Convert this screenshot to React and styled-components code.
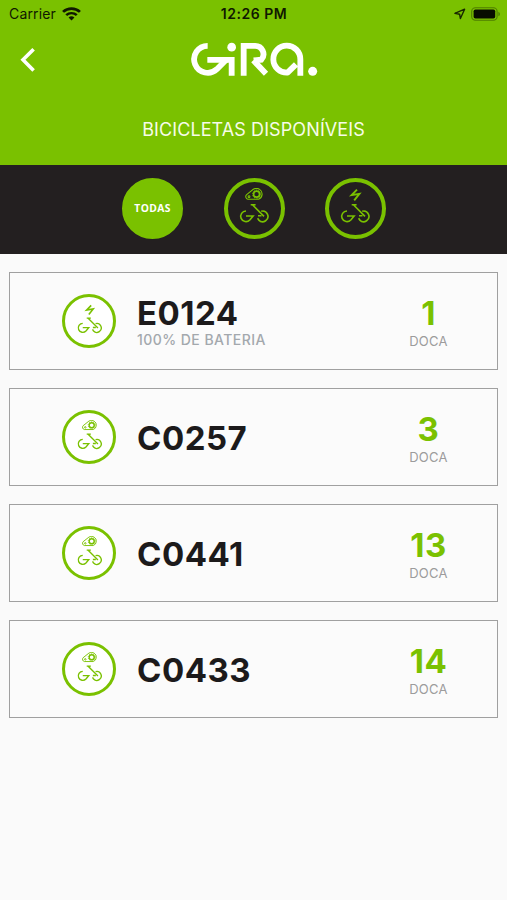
import React from "react";
import styled, { createGlobalStyle } from "styled-components";

const GREEN = "#7ac100";

const GlobalStyle = createGlobalStyle`
  * { box-sizing: border-box; }
  body { margin: 0; background: #fafafa; font-family: Inter, "Liberation Sans", sans-serif; }
`;

const Screen = styled.main`
  width: 507px;
  height: 900px;
  background: #fafafa;
  overflow: hidden;
`;

const Header = styled.header`
  height: 165px;
  background: ${GREEN};
  display: flex;
  flex-direction: column;
`;

const StatusBar = styled.div`
  height: 28px;
  padding: 0 6px 0 9px;
  display: grid;
  grid-template-columns: 1fr auto 1fr;
  align-items: center;
  color: #101800;
  font-size: 14px;
  line-height: 28px;
`;

const Carrier = styled.div`
  display: flex;
  align-items: center;
  gap: 6px;
  letter-spacing: 0.15px;
`;

const Clock = styled.div`
  font-weight: 600;
  font-size: 14px;
  letter-spacing: 0.5px;
  padding-right: 2px;
`;

const StatusIcons = styled.div`
  display: flex;
  align-items: center;
  justify-content: flex-end;
  gap: 5px;
`;

const NavBar = styled.div`
  height: 64px;
  padding: 0 20px;
  display: grid;
  grid-template-columns: 1fr auto 1fr;
  align-items: center;
`;

const BackButton = styled.button`
  width: 18px;
  height: 26px;
  padding: 0;
  border: 0;
  background: none;
  display: flex;
`;

const Title = styled.h1`
  margin: 25px 0 0;
  text-align: center;
  color: #f7fce8;
  font-size: 18px;
  line-height: 25px;
  font-weight: 400;
  letter-spacing: 0.1px;
`;

const FilterBar = styled.nav`
  height: 89px;
  background: #231f20;
  display: flex;
  align-items: center;
  justify-content: center;
  gap: 40.4px;
  padding: 0 0 3px 1px;
`;

const FilterButton = styled.button`
  width: 61px;
  height: 61px;
  padding: 0;
  border-radius: 50%;
  border: 4px solid ${GREEN};
  background: ${(p) => (p.$active ? GREEN : "transparent")};
  color: #fff;
  display: flex;
  align-items: center;
  justify-content: center;
  font: 700 10.3px "Open Sans", sans-serif;
  letter-spacing: 0.4px;
`;

const List = styled.ul`
  list-style: none;
  margin: 0;
  padding: 18px 9px;
  display: flex;
  flex-direction: column;
  gap: 18px;
`;

const Card = styled.li`
  height: 98px;
  border: 1px solid #a0a0a0;
  background: #fbfbfb;
  padding-left: 52px;
  display: flex;
  align-items: center;
`;

const BikeBadge = styled.div`
  width: 54px;
  height: 54px;
  border: 3px solid ${GREEN};
  border-radius: 50%;
  background: #fff;
  display: flex;
  align-items: center;
  justify-content: center;
`;

const BikeInfo = styled.div`
  flex: 1;
  margin-left: 21px;
  padding-top: 2px;
`;

const BikeCode = styled.div`
  color: #1c1a1b;
  font-size: 33px;
  font-weight: 700;
  line-height: 36px;
  letter-spacing: 0.5px;
`;

const Battery = styled.div`
  color: #a3a8ad;
  font-size: 14px;
  font-weight: 500;
  line-height: 18px;
  letter-spacing: 0.45px;
`;

const Dock = styled.div`
  width: 137px;
  padding-top: 6px;
  text-align: center;
`;

const DockNumber = styled.div`
  color: ${GREEN};
  font-size: 33px;
  font-weight: 700;
  line-height: 35px;
  letter-spacing: 0.5px;
`;

const DockLabel = styled.div`
  color: #9c9c9c;
  font-size: 13px;
  line-height: 21px;
  letter-spacing: 0.3px;
`;

function Wifi() {
  return (
    <svg width="19" height="14" viewBox="0 0 18 14" preserveAspectRatio="none" fill="none" stroke="#101800">
      <path d="M1 4.9a11.4 11.4 0 0 1 16 0" strokeWidth="2.6" />
      <path d="M4 8.2a7.1 7.1 0 0 1 10 0" strokeWidth="2.4" />
      <path d="M9 13.4 6.2 10.6a4 4 0 0 1 5.6 0Z" fill="#101800" stroke="none" />
    </svg>
  );
}

function LocationArrow() {
  return (
    <svg width="12" height="12" viewBox="0 0 12 12" fill="none" stroke="#182700" strokeWidth="1.4" strokeLinejoin="round">
      <path d="M.9 5.3 10.6 1.2 6.4 10.5 5.6 6.2Z" />
    </svg>
  );
}

function BatteryIcon() {
  return (
    <svg width="30" height="14" viewBox="0 0 30 14">
      <rect x=".7" y=".7" width="25.4" height="12.6" rx="3.7" fill="none" stroke="#4f7d00" strokeWidth="1.1" />
      <rect x="2.6" y="2.5" width="21.6" height="9" rx="1.8" fill="#080d00" />
      <path d="M27.4 4.7a2.5 2.5 0 0 1 0 4.6Z" fill="#4f7d00" />
    </svg>
  );
}

function Chevron() {
  return (
    <svg width="18" height="26" viewBox="0 0 18 26" fill="none" stroke="#fff" strokeWidth="3.6">
      <path d="M13.6 2.2 3 12.8l10.6 10.6" />
    </svg>
  );
}

function GiraLogo() {
  return (
    <svg width="128" height="36" viewBox="0 0 384 108" fill="none" stroke="#fff" strokeWidth="17.5" role="img" aria-label="GiRA.">
      <path d="M53 11.5A40.5 40.5 0 1 0 80.6 81.6L108 54" />
      <path d="M52 53.5H125V101" />
      <circle cx="125" cy="15.5" r="13" fill="#fff" stroke="none" />
      <path d="M161 101V11.5H194A25 25 0 0 1 214 53L191 55.5M190 55 228 95" />
      <path d="M318 67 292.5 92A40.5 40.5 0 1 1 331 52V101" strokeLinejoin="round" />
      <circle cx="368" cy="88" r="13.5" fill="#fff" stroke="none" />
    </svg>
  );
}

function BikeIcon({ electric, size = 32 }) {
  return (
    <svg width={size} height={size * 1.25} viewBox="0 2 32 40" fill="none" stroke={GREEN} strokeWidth="1.6">
      {electric ? (
        <path d="M18 3.6 12.6 9.2 20.4 7.9 15.2 14.4" strokeWidth="1.9" />
      ) : (
        <g strokeWidth="1.1">
          <path d="M15.3 3.3C17 2.3 20 2.4 21.6 3.4A5.6 5.6 0 0 1 20.5 13.3H9.8A2.8 2.8 0 0 1 8.4 8.8Z" />
          <circle cx="18.6" cy="8.2" r="3" strokeWidth="1.7" />
          <circle cx="18.6" cy="8.2" r="4.1" strokeWidth="1" strokeDasharray="1.1 1.5" />
          <circle cx="11" cy="10.7" r=".9" />
        </g>
      )}
      <path d="M8 25A5.3 5.3 0 1 0 11.8 34L15.1 30H8" />
      <path d="M12.7 18.8H17.6M14.4 18.8 26 30.4" />
      <path d="M23.2 25.3A5.3 5.3 0 1 1 20.8 34.1L19.6 32.2M20 29.8H23.5" />
    </svg>
  );
}

const bikes = [
  { code: "E0124", dock: 1, battery: 100 },
  { code: "C0257", dock: 3 },
  { code: "C0441", dock: 13 },
  { code: "C0433", dock: 14 },
];

export default function App() {
  return (
    <Screen>
      <GlobalStyle />
      <Header>
        <StatusBar>
          <Carrier>Carrier <Wifi /></Carrier>
          <Clock>12:26 PM</Clock>
          <StatusIcons><LocationArrow /><BatteryIcon /></StatusIcons>
        </StatusBar>
        <NavBar>
          <BackButton aria-label="Voltar"><Chevron /></BackButton>
          <GiraLogo />
        </NavBar>
        <Title>BICICLETAS DISPONÍVEIS</Title>
      </Header>
      <FilterBar>
        <FilterButton $active>TODAS</FilterButton>
        <FilterButton aria-label="Convencionais"><BikeIcon /></FilterButton>
        <FilterButton aria-label="Elétricas"><BikeIcon electric /></FilterButton>
      </FilterBar>
      <List>
        {bikes.map((bike) => (
          <Card key={bike.code}>
            <BikeBadge><BikeIcon electric={bike.battery !== undefined} size={27} /></BikeBadge>
            <BikeInfo>
              <BikeCode>{bike.code}</BikeCode>
              {bike.battery !== undefined && <Battery>{bike.battery}% DE BATERIA</Battery>}
            </BikeInfo>
            <Dock>
              <DockNumber>{bike.dock}</DockNumber>
              <DockLabel>DOCA</DockLabel>
            </Dock>
          </Card>
        ))}
      </List>
    </Screen>
  );
}
